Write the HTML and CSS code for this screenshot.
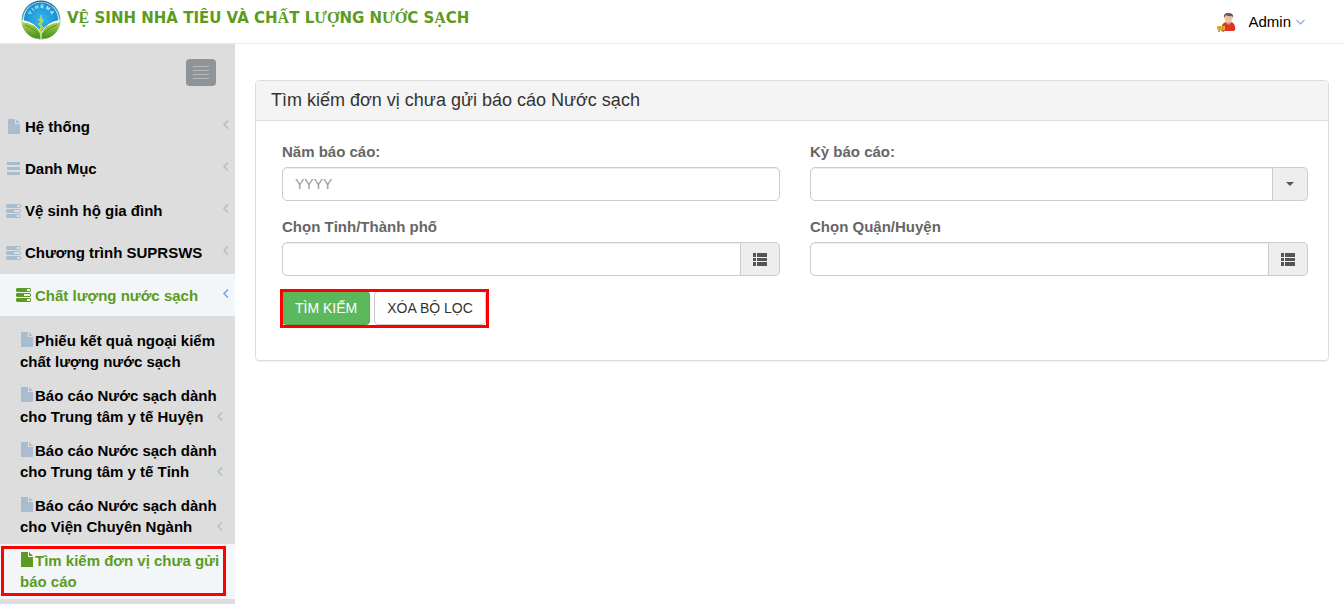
FILE: index.html
```html
<!DOCTYPE html>
<html lang="vi">
<head>
<meta charset="utf-8">
<meta name="viewport" content="width=device-width, initial-scale=1">
<title>Vệ sinh nhà tiêu và chất lượng nước sạch</title>
<link rel="stylesheet" href="styles.css">
</head>
<body>
<svg class="sprite" aria-hidden="true">
  <symbol id="file" viewBox="0 0 12 15"><path d="M0 0H7V5H12V15H0Z M8 0L12 4H8Z"/></symbol>
  <symbol id="bars" viewBox="0 0 13 13"><path d="M0 0h13v3H0zM0 5h13v3H0zM0 10h13v3H0z"/></symbol>
  <symbol id="tasks" viewBox="0 0 15 14"><path fill-rule="evenodd" d="M1 0H14L15 1V3L14 4H1L0 3V1ZM11 1V3H14V1ZM1 5H14L15 6V8L14 9H1L0 8V6ZM8 6V8H14V6ZM1 10H14L15 11V13L14 14H1L0 13V11ZM11 11V13H14V11Z"/></symbol>
  <symbol id="left" viewBox="0 0 6 9"><path d="M5 .5L1 4.500L5 8.500" fill="none" stroke="currentColor" stroke-width="1.500"/></symbol>
  <symbol id="list" viewBox="0 0 14 13"><path d="M0 0h3v4H0zM4 0h10v4H4zM0 5h3v3H0zM4 5h10v3H4zM0 9h3v4H0zM4 9h10v4H4z"/></symbol>
</svg>

<header class="topbar">
  <a class="brand" href="#">
    <svg class="logo" viewBox="0 0 40 40" aria-hidden="true">
      <defs>
        <radialGradient id="sky"><stop offset="0" stop-color="#38b7ea"/><stop offset="1" stop-color="#1591d2"/></radialGradient>
        <linearGradient id="ring" x2="0" y2="1"><stop offset="0" stop-color="#246b9b"/><stop offset=".5" stop-color="#76b7b0"/><stop offset="1" stop-color="#488e26"/></linearGradient>
        <linearGradient id="leaf" x2="0" y2="1"><stop offset="0" stop-color="#b3d64c"/><stop offset="1" stop-color="#3f8c1b"/></linearGradient>
        <path id="arc" d="M9 19A11 11 0 0 1 31 19"/>
      </defs>
      <circle cx="20" cy="20" r="19.500" fill="url(#ring)"/>
      <circle cx="20" cy="20" r="18" fill="#d9f0f4"/>
      <circle cx="20" cy="19.500" r="17" fill="url(#sky)"/>
      <path d="M1 20Q3 37 20 39.500Q37 37 39 20Q25 22 20 33Q15 22 1 20Z" fill="#fff"/>
      <path d="M1 22Q15 23 19.500 34V39Q4 38 1 22ZM39 22Q25 23 20.500 34V39Q36 38 39 22Z" fill="url(#leaf)"/>
      <path d="M4 25Q14 28 19 37M36 25Q26 28 21 37" fill="none" stroke="#4e9721"/>
      <path d="M20 15V37M17 20Q24 18 21 22Q15 24 20 26Q25 28 19 29Q17 30 20 32" fill="none" stroke="#c8df48" stroke-width="1.300"/>
      <text class="logo-text"><textPath href="#arc" startOffset="50%" text-anchor="middle">V I H E M A</textPath></text>
    </svg>
    <span class="brand-name">V<b>Ệ</b> SINH NHÀ TIÊU VÀ CH<b>Ấ</b>T L<b>ƯỢ</b>NG N<b>ƯỚ</b>C S<b>Ạ</b>CH</span>
  </a>
  <button class="user" type="button">
    <svg class="avatar" viewBox="0 0 20 20" aria-hidden="true">
      <path d="M4 19Q4 11 9 10L11.500 12L14 10Q18 11 18.500 17L17 19Z" fill="#df3427"/>
      <path d="M9 9H14V11L11.500 13L9 11Z" fill="#d99b78"/>
      <ellipse cx="11.500" cy="6" rx="4" ry="5" fill="#edc3a5"/>
      <path d="M7 6Q6 1 11.500 1Q17 1 16 6L15 4Q11 5 9 3Z" fill="#745447"/>
      <path d="M0 14H8V18H0Z" fill="#e7c52c"/><path d="M0 16H8M3 14V18M6 14V18" stroke="#b98c18" stroke-width=".7"/>
      <circle cx="2" cy="19" r="1" fill="#a68224"/><circle cx="6" cy="19" r="1" fill="#a68224"/>
    </svg>
    <span>Admin</span>
    <svg class="down" viewBox="0 0 9 6" aria-hidden="true"><path d="M.5 1L4.500 5L8.500 1" fill="none" stroke="#8faed4" stroke-width="1.200"/></svg>
  </button>
</header>

<div class="layout">
  <nav class="sidebar" aria-label="Menu">
    <div class="toggle-row">
      <button class="toggler" type="button" aria-label="Thu gọn menu"><svg viewBox="0 0 16 13"><path d="M0 .5H16M0 4.500H16M0 8.500H16M0 12.500H16" stroke="#b5b9bc"/></svg></button>
    </div>
    <ul class="menu">
      <li><a class="item" href="#"><span class="slot"><svg class="file"><use href="#file"/></svg></span><span>Hệ thống</span><svg class="left"><use href="#left"/></svg></a></li>
      <li><a class="item" href="#"><span class="slot"><svg class="bars"><use href="#bars"/></svg></span><span>Danh Mục</span><svg class="left"><use href="#left"/></svg></a></li>
      <li><a class="item" href="#"><span class="slot"><svg class="tasks"><use href="#tasks"/></svg></span><span>Vệ sinh hộ gia đình</span><svg class="left"><use href="#left"/></svg></a></li>
      <li><a class="item" href="#"><span class="slot"><svg class="tasks"><use href="#tasks"/></svg></span><span>Chương trình SUPRSWS</span><svg class="left"><use href="#left"/></svg></a></li>
      <li>
        <a class="item open" href="#"><span class="slot"><svg class="tasks"><use href="#tasks"/></svg></span><span>Chất lượng nước sạch</span><svg class="left"><use href="#left"/></svg></a>
        <ul class="submenu">
          <li><a class="subitem" href="#"><span><svg class="file"><use href="#file"/></svg>Phiếu kết quả ngoại kiểm<br>chất lượng nước sạch</span></a></li>
          <li><a class="subitem" href="#"><span><svg class="file"><use href="#file"/></svg>Báo cáo Nước sạch dành<br>cho Trung tâm y tế Huyện</span><svg class="left"><use href="#left"/></svg></a></li>
          <li><a class="subitem" href="#"><span><svg class="file"><use href="#file"/></svg>Báo cáo Nước sạch dành<br>cho Trung tâm y tế Tỉnh</span><svg class="left"><use href="#left"/></svg></a></li>
          <li><a class="subitem" href="#"><span><svg class="file"><use href="#file"/></svg>Báo cáo Nước sạch dành<br>cho Viện Chuyên Ngành</span><svg class="left"><use href="#left"/></svg></a></li>
          <li><a class="subitem current marked" href="#" aria-current="page"><span><svg class="file"><use href="#file"/></svg>Tìm kiếm đơn vị chưa gửi<br>báo cáo</span></a></li>
        </ul>
      </li>
    </ul>
  </nav>

  <main class="content">
    <section class="panel">
      <h1 class="panel-title">Tìm kiếm đơn vị chưa gửi báo cáo Nước sạch</h1>
      <form class="panel-body">
        <div class="fields">
          <div class="field">
            <label for="year">Năm báo cáo:</label>
            <input class="control" id="year" type="text" placeholder="YYYY">
          </div>
          <div class="field">
            <label for="period">Kỳ báo cáo:</label>
            <div class="group">
              <select class="control" id="period"><option></option></select>
              <span class="addon narrow"><svg class="caret" viewBox="0 0 8 4" aria-hidden="true"><path d="M0 0H8L4 4Z"/></svg></span>
            </div>
          </div>
          <div class="field">
            <label for="province">Chọn Tỉnh/Thành phố</label>
            <div class="group">
              <input class="control" id="province" type="text">
              <button class="addon" type="button" aria-label="Danh sách Tỉnh/Thành phố"><svg class="list"><use href="#list"/></svg></button>
            </div>
          </div>
          <div class="field">
            <label for="district">Chọn Quận/Huyện</label>
            <div class="group">
              <input class="control" id="district" type="text">
              <button class="addon" type="button" aria-label="Danh sách Quận/Huyện"><svg class="list"><use href="#list"/></svg></button>
            </div>
          </div>
        </div>
        <div class="actions marked">
          <button class="btn primary" type="button">TÌM KIẾM</button>
          <button class="btn" type="reset">XÓA BỘ LỌC</button>
        </div>
      </form>
    </section>
  </main>
</div>
</body>
</html>
```

FILE: styles.css
```css
* { box-sizing: border-box; }

body {
  margin: 0;
  min-height: 100vh;
  display: flex;
  flex-direction: column;
  background: #fff;
  color: #333;
  font: 14px/20px "Liberation Sans", Arial, sans-serif;
}

button, input, select { font: inherit; }
button { cursor: pointer; }
a { text-decoration: none; }
ul { list-style: none; margin: 0; padding: 0; }
svg { display: block; flex: none; fill: currentColor; }
.sprite { position: absolute; width: 0; height: 0; }

.file { width: 12px; height: 15px; }
.bars { width: 13px; height: 13px; }
.tasks { width: 15px; height: 14px; }
.left { width: 6px; height: 9px; color: #a6bfd2; }
.list { width: 14px; height: 13px; }
.caret { width: 8px; height: 4px; }

/* Header */
.topbar {
  height: 44px;
  display: flex;
  justify-content: space-between;
  padding: 0 39px 0 21px;
  border-bottom: 1px solid #e7e9f1;
}
.brand { display: flex; gap: 6px; color: #5c9b21; }
.logo { width: 40px; height: 40px; }
.logo-text { font: bold 5px "Liberation Sans", sans-serif; fill: #d9f1fa; }
.brand-name {
  padding-top: 8px;
  font: bold 15px/20px "DejaVu Sans", Verdana, sans-serif;
  white-space: nowrap;
}
.brand-name b { font: bold 16px/20px "Liberation Serif", serif; }
.user {
  display: flex;
  align-items: center;
  padding: 0;
  border: 0;
  background: none;
  color: #000;
  font-size: 15px;
}
.avatar { width: 20px; height: 20px; margin-right: 11px; }
.down { width: 9px; height: 6px; margin-left: 5px; }

/* Sidebar */
.layout { flex: 1; display: flex; }
.sidebar {
  flex: 0 0 235px;
  min-width: 0;
  padding-bottom: 5px;
  background: #ddd;
  font: bold 15px/21px "Liberation Sans", Arial, sans-serif;
}
.toggle-row { display: flex; justify-content: flex-end; padding: 15px 19px 20px; }
.toggler {
  display: grid;
  place-items: center;
  width: 30px;
  height: 27px;
  padding: 0;
  border: 0;
  border-radius: 4px;
  background: #8f9499;
}
.toggler svg { width: 16px; height: 13px; }
.item {
  height: 42px;
  display: flex;
  align-items: center;
  gap: 4px;
  padding: 0 6px 1px 6px;
  color: #000;
  white-space: nowrap;
}
.item .left { margin: 0 0 4px auto; }
.slot { width: 15px; display: flex; justify-content: center; color: #a9bdcf; }
.item.open { padding: 0 6px 0 16px; background: #f2f6f9; color: #5c9b21; }
.item.open .slot { color: #5c9b21; }
.item.open .left { color: #6fa4d9; }
.submenu { padding-top: 8px; }
.subitem {
  display: flex;
  align-items: flex-end;
  padding: 6px 12px 7px 20px;
  color: #000;
  white-space: nowrap;
}
.subitem span { flex: 1; min-width: 0; }
.subitem .file {
  display: inline-block;
  margin: 0 2px 0 1px;
  vertical-align: -1px;
  color: #a9bdcf;
}
.subitem .left { margin-bottom: 6px; }
.subitem.current { background: #f2f6f9; color: #5c9b21; }
.subitem.current .file { color: #5c9b21; }

/* Red highlight frame */
.marked { position: relative; }
.marked::after {
  content: "";
  position: absolute;
  border: 3px solid #f00;
  pointer-events: none;
}
.subitem.marked::after { inset: 2px 9px 3px 1px; }
.actions.marked::after { inset: -2px -3px -3px -2px; }

/* Search panel */
.content { flex: 1; min-width: 0; padding: 36px 15px 20px 20px; }
.panel {
  border: 1px solid #ddd;
  border-radius: 4px;
  box-shadow: 0 1px 1px rgba(0, 0, 0, .05);
}
.panel-title {
  margin: 0;
  padding: 9px 15px 10px;
  border-bottom: 1px solid #ddd;
  border-radius: 3px 3px 0 0;
  background: #f4f4f4;
  font-size: 18px;
  font-weight: 400;
  line-height: 20px;
}
.panel-body { padding: 20px 20px 35px 26px; }
.fields { display: grid; grid-template-columns: 1fr 1fr; gap: 15px 30px; }
.field { display: flex; flex-direction: column; gap: 5px; min-width: 0; }
.field label { line-height: 21px; font-size: 15px; font-weight: 700; color: #666; }
.control {
  width: 100%;
  min-width: 0;
  height: 34px;
  padding: 6px 12px;
  border: 1px solid #ccc;
  border-radius: 5px;
  background: #fff;
  box-shadow: inset 0 1px 1px rgba(0, 0, 0, .075);
  color: #555;
  appearance: none;
}
.control::placeholder { color: #999; opacity: 1; }
.group { display: flex; }
.group .control { flex: 1; border-radius: 5px 0 0 5px; }
.addon {
  display: grid;
  place-items: center;
  width: 39px;
  height: 34px;
  padding: 0;
  border: 1px solid #ccc;
  border-left: 0;
  border-radius: 0 5px 5px 0;
  background: #eee;
  color: #555;
}
.addon.narrow { width: 35px; }
.actions { display: inline-flex; gap: 4px; margin: 15px 0 0; padding: 0; }
.btn {
  height: 34px;
  padding: 0 12px;
  border: 1px solid #ccc;
  border-radius: 4px;
  background: #fff;
  color: #333;
  white-space: nowrap;
}
.btn.primary { border-color: #4cae4c; background: #5cb85c; color: #fff; }
```
